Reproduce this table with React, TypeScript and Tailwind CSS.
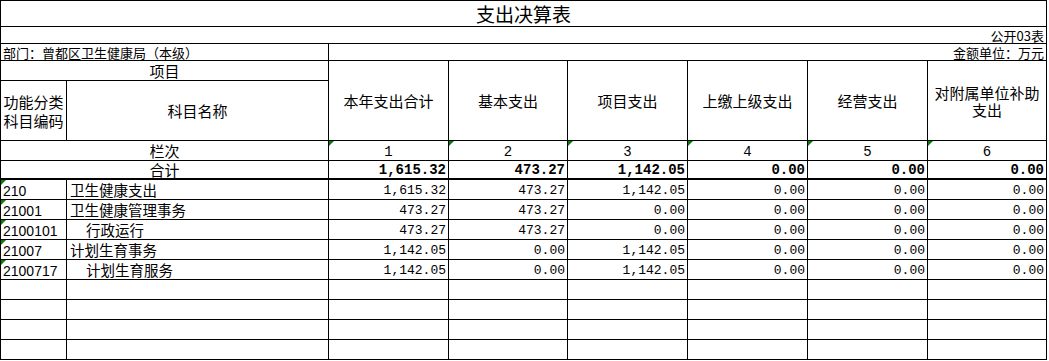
import React from 'react';

// 支出决算表 (公开03表) — spreadsheet-style layout on a fixed grid

const cjk = "font-['Noto_Sans_CJK_SC','Noto_Sans',sans-serif]";
const num = "font-['Liberation_Mono','Noto_Sans_CJK_SC',monospace]";
const code = "font-['Liberation_Sans','Noto_Sans_CJK_SC',sans-serif]";

const box = 'border-r border-b border-black flex items-center min-w-0';
const cell = `${box} whitespace-nowrap leading-none`;

const headers = ['本年支出合计', '基本支出', '项目支出', '上缴上级支出', '经营支出', '对附属单位补助支出'];
const totals = ['1,615.32', '473.27', '1,142.05', '0.00', '0.00', '0.00'];

const rows = [
  { code: '210', name: '卫生健康支出', indent: false, v: ['1,615.32', '473.27', '1,142.05', '0.00', '0.00', '0.00'] },
  { code: '21001', name: '卫生健康管理事务', indent: false, v: ['473.27', '473.27', '0.00', '0.00', '0.00', '0.00'] },
  { code: '2100101', name: '行政运行', indent: true, v: ['473.27', '473.27', '0.00', '0.00', '0.00', '0.00'] },
  { code: '21007', name: '计划生育事务', indent: false, v: ['1,142.05', '0.00', '1,142.05', '0.00', '0.00', '0.00'] },
  { code: '2100717', name: '计划生育服务', indent: true, v: ['1,142.05', '0.00', '1,142.05', '0.00', '0.00', '0.00'] },
];

// small green marker Excel draws on cells stored as text
const Marker = () => (
  <span className="absolute left-0 top-0 w-0 h-0 border-t-[5px] border-t-[#0a7d0a] border-r-[5px] border-r-transparent" />
);

const App: React.FC = () => {
  return (
    <div className="w-[1049px] h-[361px] bg-white text-black">
      <div className="grid w-[1047px] grid-cols-[66px_262px_120px_119px_120px_120px_120px_119px] grid-rows-[26px_17px_17px_20px_60px_20px_19px_repeat(9,20px)] border-l border-t border-black">
        {/* title */}
        <div className={`${cell} col-span-8 justify-center ${cjk} text-[19px]`}>支出决算表</div>

        <div className={`${cell} col-span-8 justify-end pr-[2px] ${cjk} text-[13px]`}>公开03表</div>

        <div className={`${cell} col-span-2 pl-[2px] ${cjk} text-[13px]`}>部门：曾都区卫生健康局（本级）</div>
        <div className={`${cell} col-span-6 justify-end pr-[2px] ${cjk} text-[13px]`}>金额单位：万元</div>

        {/* header block */}
        <div className={`${cell} col-span-2 justify-center ${cjk} text-[15px]`}>项目</div>
        {headers.map((h, i) => (
          <div
            key={h}
            className={`${box} row-span-2 justify-center text-center px-1 leading-[17px] ${cjk} text-[15px]`}
            style={{ gridColumnStart: i + 3, gridRowStart: 4 }}
          >
            {h}
          </div>
        ))}
        <div className={`${box} justify-center text-center leading-[19px] ${cjk} text-[15px]`}>
          功能分类科目编码
        </div>
        <div className={`${cell} justify-center ${cjk} text-[15px]`}>科目名称</div>

        {/* 栏次 */}
        <div className={`${cell} col-span-2 justify-center ${cjk} text-[15px]`}>栏次</div>
        {[1, 2, 3, 4, 5, 6].map((n) => (
          <div key={n} className={`${cell} relative justify-center pt-[3px] ${num} text-[14px]`}>
            <Marker />
            {n}
          </div>
        ))}

        {/* 合计 */}
        <div className={`${cell} col-span-2 justify-center border-b-2 ${cjk} text-[15px]`}>合计</div>
        {totals.map((t, i) => (
          <div key={i} className={`${cell} justify-end pr-[2px] border-b-2 font-bold ${num} text-[14px]`}>
            {t}
          </div>
        ))}

        {/* data rows */}
        {rows.map((r) => (
          <React.Fragment key={r.code}>
            <div className={`${cell} relative pl-[2px] pt-[2px] ${code} text-[14px]`}>
              <Marker />
              {r.code}
            </div>
            <div className={`${cell} ${r.indent ? 'pl-[19px]' : 'pl-[3px]'} pt-[1px] ${cjk} text-[14.5px]`}>{r.name}</div>
            {r.v.map((x, i) => (
              <div key={i} className={`${cell} justify-end pr-[2px] pt-[2px] ${num} text-[13px]`}>
                {x}
              </div>
            ))}
          </React.Fragment>
        ))}

        {/* empty rows */}
        {Array.from({ length: 4 }).map((_, k) =>
          Array.from({ length: 8 }).map((__, c) => <div key={`e${k}-${c}`} className={cell} />)
        )}
      </div>
    </div>
  );
};

export default App;
